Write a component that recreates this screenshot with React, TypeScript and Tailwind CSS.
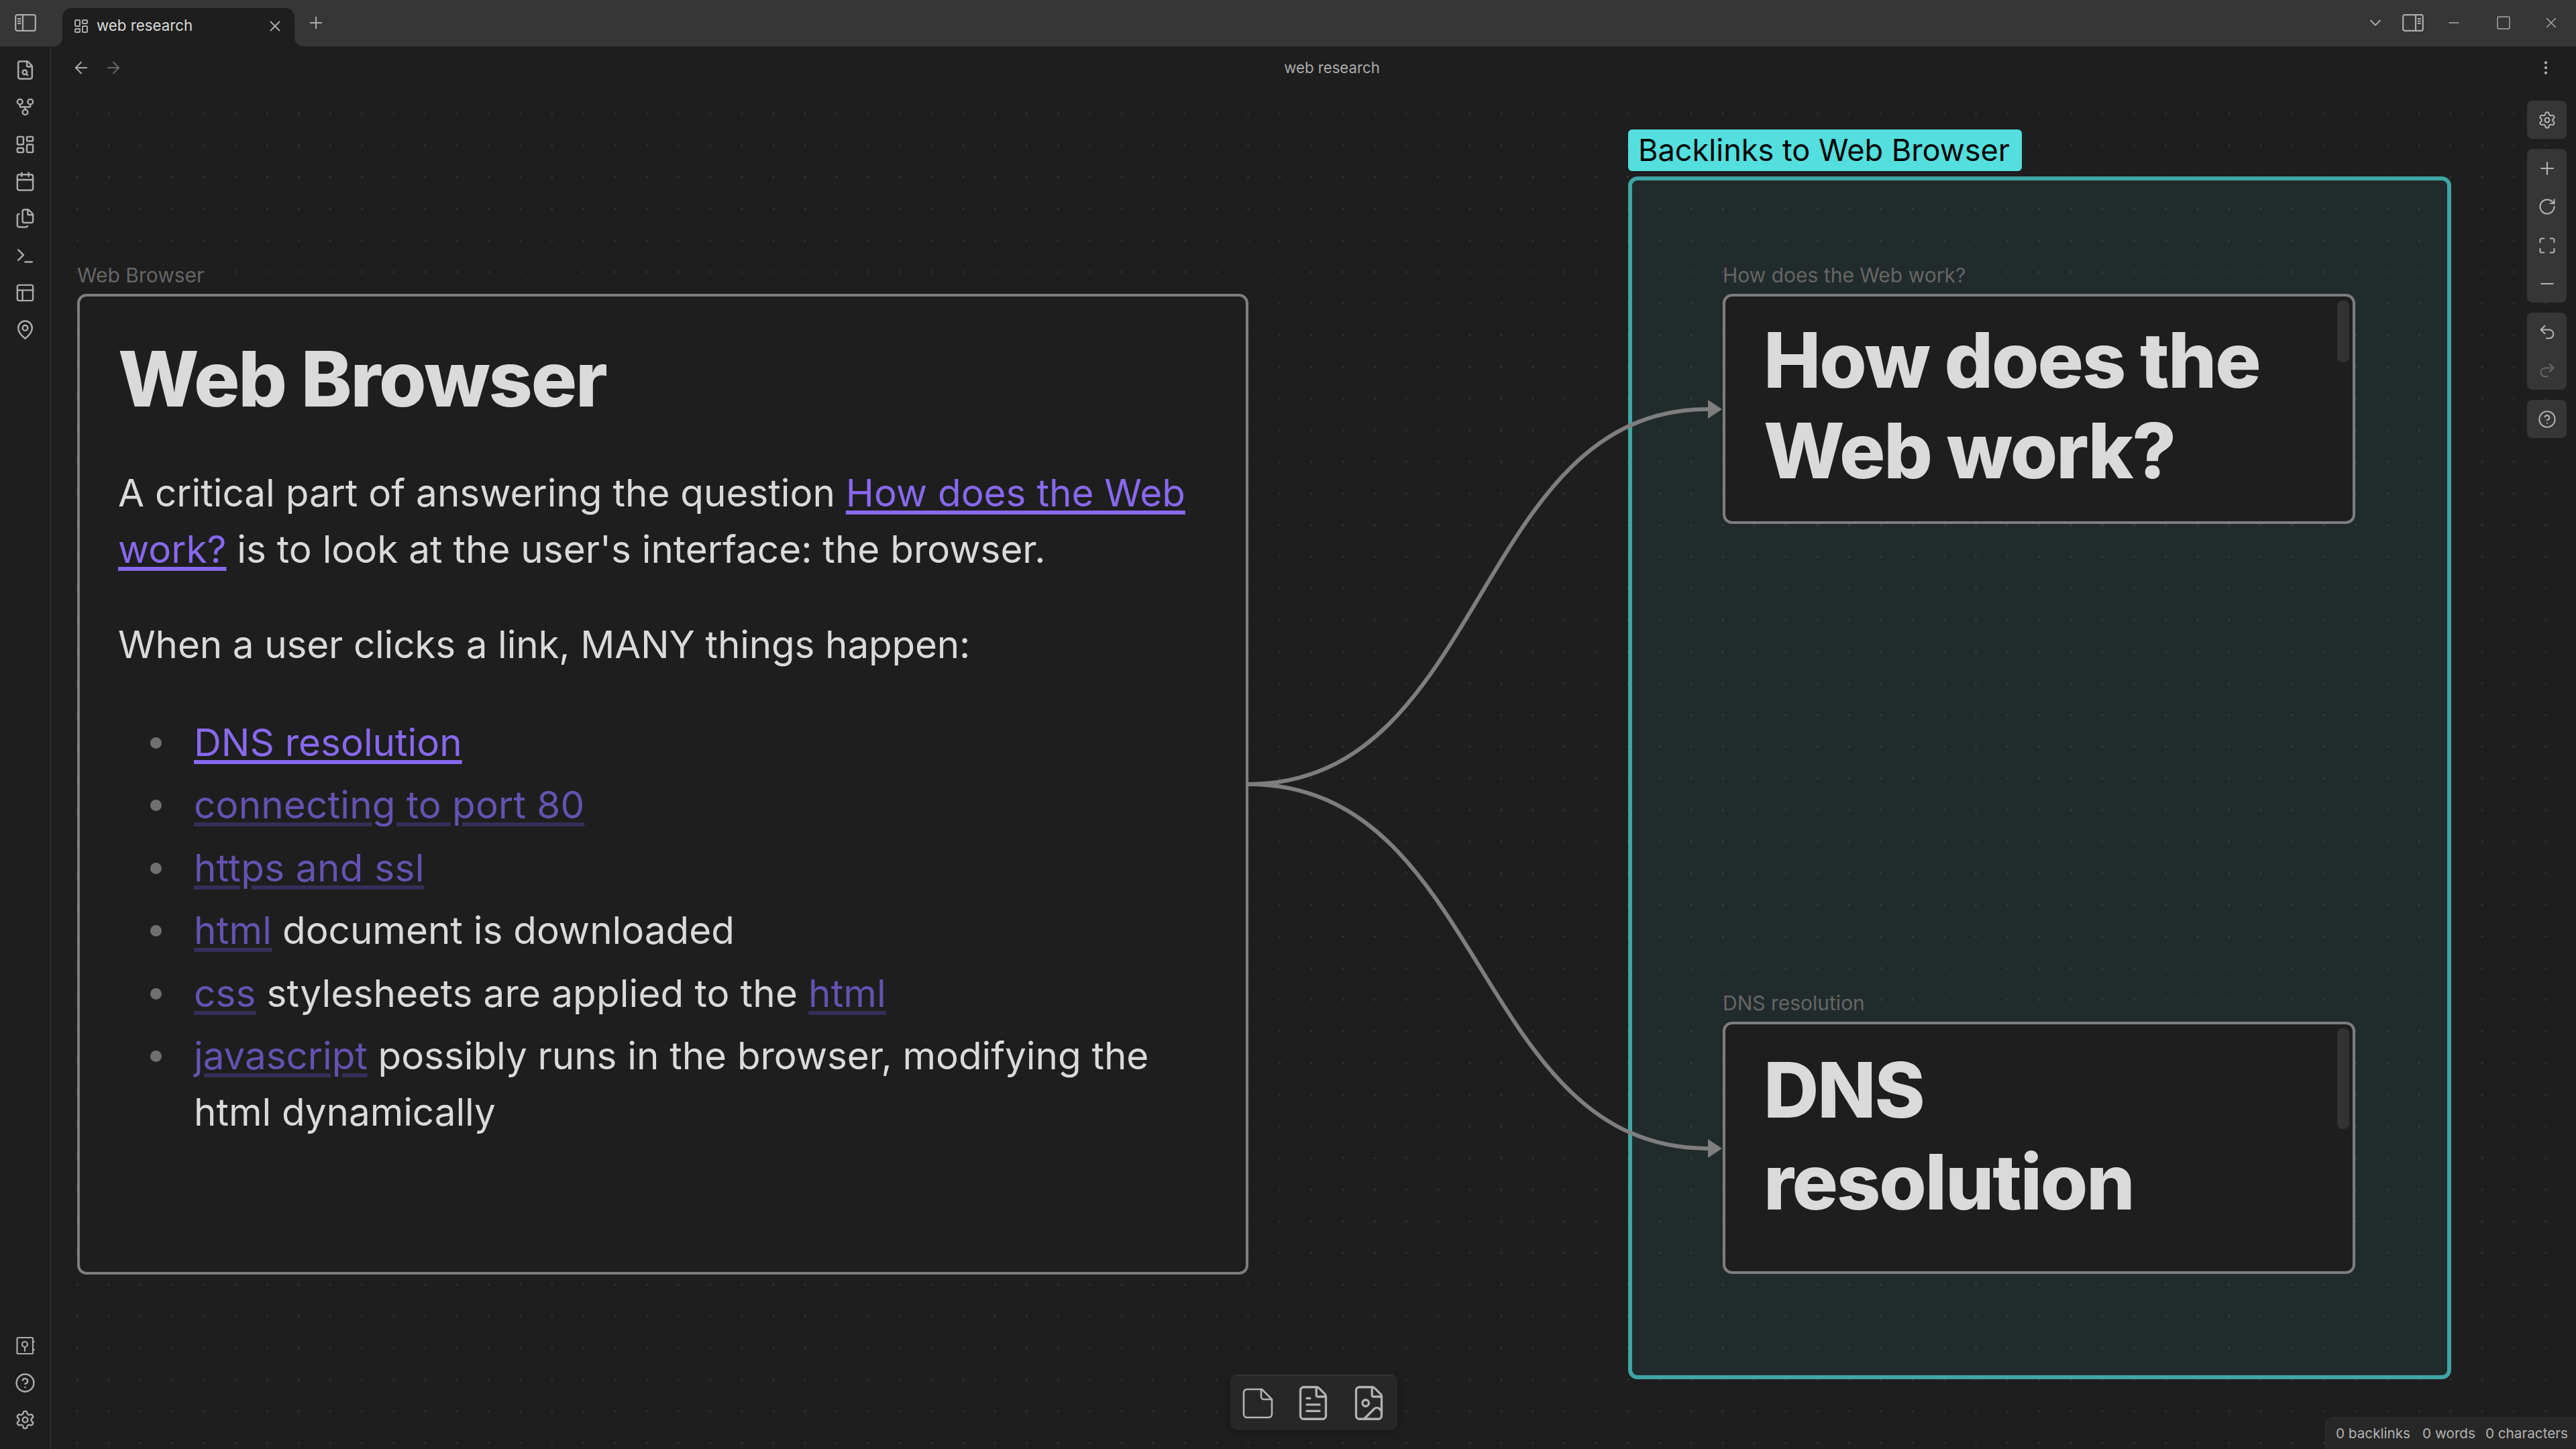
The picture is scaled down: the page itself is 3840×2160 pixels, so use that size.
import React from "react";
import {
  FileSearch, GitFork, LayoutDashboard, Calendar, Files, Terminal, PanelsTopLeft, MapPin,
  CircleHelp, Settings, X, Plus, ChevronDown, Minus, Square, ArrowLeft, ArrowRight,
  EllipsisVertical, RotateCw, Maximize, Undo2, Redo2, FileText, FileImage,
} from "lucide-react";

const ic = { strokeWidth: 1.9 };

function PanelGlyph({ side }: { side: "left" | "right" }) {
  return (
    <svg width="32" height="26" viewBox="0 0 32 26" fill="none" stroke="#ababab" strokeWidth="2.2" strokeLinecap="round">
      <rect x="1.2" y="1.2" width="29.6" height="23.6" rx="2.5" />
      {side === "left" ? (
        <>
          <path d="M12 1.5v23" />
          <path d="M5 7h3.5M5 10.5h3.5M5 14h3.5" />
        </>
      ) : (
        <>
          <path d="M20 1.5v23" />
          <path d="M23.5 7H27M23.5 10.5H27M23.5 14H27" />
        </>
      )}
    </svg>
  );
}

function VaultGlyph() {
  return (
    <svg width="28" height="28" viewBox="0 0 28 28" fill="none" stroke="#ababab" strokeWidth="2.2" strokeLinecap="round">
      <rect x="1.5" y="2" width="23.5" height="24" rx="1.5" />
      <circle cx="13" cy="12" r="4" />
      <path d="M13 16v6" />
      <path d="M25.5 8h1.5M25.5 20h1.5" />
    </svg>
  );
}

function NoteGlyph() {
  return (
    <svg width="46" height="46" viewBox="0 0 46 46" fill="none" stroke="#b3b3b3" strokeWidth="2.6" strokeLinejoin="round">
      <path d="M29 2H7a5 5 0 0 0-5 5v32a5 5 0 0 0 5 5h32a5 5 0 0 0 5-5V17Z" />
      <path d="M28 2v11a4 4 0 0 0 4 4h12" />
    </svg>
  );
}

function RibbonIcon({ children }: { children: React.ReactNode }) {
  return <div className="flex h-[55.3px] w-full items-center justify-center text-[#ababab]">{children}</div>;
}

function WinIcon({ children, className }: { children: React.ReactNode; className: string }) {
  return <div className={`flex items-center justify-center text-[#ababab] ${className}`}>{children}</div>;
}

function ToolBtn({ children, dim }: { children: React.ReactNode; dim?: boolean }) {
  return (
    <div className={`flex h-[57.3px] w-full items-center justify-center ${dim ? "text-[#666666]" : "text-[#b3b3b3]"}`}>
      {children}
    </div>
  );
}

function Link({ children, dim }: { children: React.ReactNode; dim?: boolean }) {
  return (
    <span
      className={`underline decoration-[5.5px] underline-offset-[6px] ${
        dim ? "text-[#6552b1] decoration-[#382e58]" : "text-[#8868ee] decoration-[#8868ee]"
      }`}
    >
      {children}
    </span>
  );
}

function Li({ children }: { children: React.ReactNode }) {
  return (
    <li className="relative">
      <span className="absolute left-[-65px] top-[34px] h-[17px] w-[17px] rounded-full bg-[#707070]" />
      {children}
    </li>
  );
}

export default function App() {
  return (
    <div className="flex h-[2160px] w-[3840px] flex-col overflow-hidden bg-[#1e1e1e] font-['Inter',sans-serif] text-[#dadada]">
      {/* Title bar */}
      <div className="flex h-[69px] shrink-0 items-stretch bg-[#363636]">
        <div className="flex w-[75px] items-center justify-center pb-[2px]">
          <PanelGlyph side="left" />
        </div>
        <div className="relative ml-[18px] mt-[12px] flex w-[346px] items-center rounded-t-[14px] bg-[#1e1e1e] pb-[4px] pl-[16px] pr-[16px]">
          <span className="absolute bottom-0 left-[-14px] h-[14px] w-[14px] bg-[radial-gradient(circle_at_0_0,#363636_14px,#1e1e1e_14.5px)]" />
          <span className="absolute bottom-0 right-[-14px] h-[14px] w-[14px] bg-[radial-gradient(circle_at_100%_0,#363636_14px,#1e1e1e_14.5px)]" />
          <LayoutDashboard size={24} strokeWidth={2} className="text-[#ababab]" />
          <span className="ml-[11px] text-[22.3px] leading-none text-[#dadada]">web research</span>
          <X size={26} strokeWidth={1.75} className="ml-auto text-[#ababab]" />
        </div>
        <div className="ml-[18px] flex items-center pb-[1px] text-[#ababab]">
          <Plus size={28} strokeWidth={1.75} />
        </div>
        <div className="ml-auto flex h-full items-center pb-[2px]">
          <WinIcon className="w-[40px]"><ChevronDown size={28} strokeWidth={1.6} /></WinIcon>
          <WinIcon className="ml-[16px] w-[40px]"><PanelGlyph side="right" /></WinIcon>
          <WinIcon className="ml-[21px] w-[40px]"><Minus size={24} strokeWidth={1.4} /></WinIcon>
          <WinIcon className="ml-[34px] w-[40px]"><Square size={24} strokeWidth={1.4} /></WinIcon>
          <WinIcon className="ml-[31px] mr-[17px] w-[40px]"><X size={26} strokeWidth={1.3} /></WinIcon>
        </div>
      </div>

      <div className="flex min-h-0 flex-1">
        {/* Ribbon */}
        <div className="flex w-[76px] shrink-0 flex-col items-center border-r-[1.5px] border-[#363636] pb-[16px] pt-[8px]">
          <RibbonIcon><FileSearch size={31} {...ic} /></RibbonIcon>
          <RibbonIcon><GitFork size={31} {...ic} /></RibbonIcon>
          <RibbonIcon><LayoutDashboard size={31} {...ic} /></RibbonIcon>
          <RibbonIcon><Calendar size={31} {...ic} /></RibbonIcon>
          <RibbonIcon><Files size={31} {...ic} /></RibbonIcon>
          <RibbonIcon><Terminal size={31} {...ic} /></RibbonIcon>
          <RibbonIcon><PanelsTopLeft size={31} {...ic} /></RibbonIcon>
          <RibbonIcon><MapPin size={31} {...ic} /></RibbonIcon>
          <div className="mt-auto w-full">
            <RibbonIcon><VaultGlyph /></RibbonIcon>
            <RibbonIcon><CircleHelp size={31} {...ic} /></RibbonIcon>
            <RibbonIcon><Settings size={31} {...ic} /></RibbonIcon>
          </div>
        </div>

        {/* Canvas view */}
        <div className="relative min-w-0 flex-1 bg-[#1e1e1e] bg-[radial-gradient(circle,#3a3a3a_1.3px,transparent_1.6px)] bg-[length:47.18px_47.18px] bg-[position:15.6px_29.9px]">
          <div className="flex h-[80px] items-center bg-[#1e1e1e] pb-[16px] pl-[31px] pr-[32px] text-[#ababab]">
            <ArrowLeft size={28} strokeWidth={1.75} />
            <ArrowRight size={28} strokeWidth={1.75} className="ml-[20px] text-[#666666]" />
            <div className="flex-1 pl-[6px] text-center text-[22.2px] leading-none text-[#ababab]">web research</div>
            <EllipsisVertical size={26} strokeWidth={2} />
          </div>

          {/* Group */}
          <div className="absolute left-[2351px] top-[194px] h-[1793px] w-[1227px] rounded-[14px] border-[6px] border-[#3fa5a5] bg-[#53c8c8]/[0.08]" />
          <div className="absolute left-[2351px] top-[124px] flex h-[62px] w-[587px] items-center whitespace-nowrap rounded-[6px] bg-[#53dfdd] pl-[15px] text-[45.1px] leading-none text-black">
            Backlinks to Web Browser
          </div>

          {/* Edges */}
          <svg className="pointer-events-none absolute left-0 top-0" width="3764" height="2091" fill="none">
            <path d="M1784 1100 C2140 1100 2120 541 2470 541" stroke="#7e7e7e" strokeWidth="6" />
            <path d="M1784 1100 C2140 1100 2120 1643 2470 1643" stroke="#7e7e7e" strokeWidth="6" />
            <polygon points="2491,541 2470,527 2470,555" fill="#7e7e7e" />
            <polygon points="2491,1643 2470,1629 2470,1657" fill="#7e7e7e" />
          </svg>

          {/* Web Browser card */}
          <div className="absolute left-[39px] top-[326px] text-[30px] leading-none text-[#666666]">Web Browser</div>
          <div className="absolute left-[39px] top-[369px] h-[1462px] w-[1746px] rounded-[14px] border-[4px] border-[#7e7e7e] bg-[#1e1e1e] px-[57px] text-[56.6px] leading-[84px]">
            <h1 className="mt-[60px] text-[114px] font-extrabold leading-[125px] tracking-[-2.1px]">Web Browser</h1>
            <p className="mt-[66px]">
              A critical part of answering the question <Link>How does the Web work?</Link> is to look at the user's interface: the browser.
            </p>
            <p className="mt-[58px] tracking-[-0.16px]">When a user clicks a link, MANY things happen:</p>
            <ul className="mt-[62px] pl-[113px]">
              <Li><span className="block h-[93.4px]"><Link>DNS resolution</Link></span></Li>
              <Li><span className="block h-[93.4px] tracking-[0.18px]"><Link dim>connecting to port 80</Link></span></Li>
              <Li><span className="block h-[93.4px] tracking-[0.38px]"><Link dim>https and ssl</Link></span></Li>
              <Li><span className="block h-[93.4px]"><span className="tracking-[0.2px]"><Link dim>html</Link></span> document is downloaded</span></Li>
              <Li><span className="block h-[93.4px] tracking-[0.14px]"><Link dim>css</Link> stylesheets are applied to the <Link dim>html</Link></span></Li>
              <Li><span className="tracking-[-0.05px]"><Link dim>javascript</Link> possibly runs in the browser, modifying the html dynamically</span></Li>
            </ul>
          </div>

          {/* How does the Web work card */}
          <div className="absolute left-[2492px] top-[326px] text-[30px] leading-none text-[#666666]">How does the Web work?</div>
          <div className="absolute left-[2492px] top-[369px] h-[343px] w-[943px] overflow-hidden rounded-[14px] border-[4px] border-[#7e7e7e] bg-[#1e1e1e] px-[57px] pt-[27px]">
            <div className="absolute right-[5px] top-[6px] h-[92px] w-[18px] rounded-[8px] bg-[#333333]" />
            <h1 className="text-[114px] font-extrabold leading-[135px] tracking-[-2.1px]">How does the Web work?</h1>
          </div>

          {/* DNS card */}
          <div className="absolute left-[2492px] top-[1411px] text-[30px] leading-none text-[#666666]">DNS resolution</div>
          <div className="absolute left-[2492px] top-[1454px] h-[376px] w-[943px] overflow-hidden rounded-[14px] border-[4px] border-[#7e7e7e] bg-[#1e1e1e] px-[57px] pt-[29px]">
            <div className="absolute right-[5px] top-[6px] h-[150px] w-[18px] rounded-[8px] bg-[#333333]" />
            <h1 className="text-[114px] font-extrabold leading-[137px] tracking-[-2.1px]">
              DNS
              <br />
              resolution
            </h1>
          </div>

          {/* Right toolbar */}
          <div className="absolute left-[3691px] top-[81px] flex w-[59px] flex-col gap-[15px]">
            <div className="rounded-[8px] bg-[#363636]">
              <ToolBtn><Settings size={28} strokeWidth={1.75} /></ToolBtn>
            </div>
            <div className="rounded-[8px] bg-[#363636]">
              <ToolBtn><Plus size={30} strokeWidth={1.75} /></ToolBtn>
              <ToolBtn><RotateCw size={28} strokeWidth={1.75} /></ToolBtn>
              <ToolBtn><Maximize size={28} strokeWidth={1.75} /></ToolBtn>
              <ToolBtn><Minus size={30} strokeWidth={1.75} /></ToolBtn>
            </div>
            <div className="rounded-[8px] bg-[#363636]">
              <ToolBtn><Undo2 size={28} strokeWidth={1.75} /></ToolBtn>
              <ToolBtn dim><Redo2 size={28} strokeWidth={1.75} /></ToolBtn>
            </div>
            <div className="rounded-[8px] bg-[#363636]">
              <ToolBtn><CircleHelp size={28} strokeWidth={1.75} /></ToolBtn>
            </div>
          </div>

          {/* Bottom toolbar */}
          <div className="absolute left-[1758px] top-[1980px] flex h-[83px] w-[249px] items-center rounded-[10px] border-t-[2px] border-[#333333] bg-[#272727] pl-[18px] shadow-[0_4px_12px_rgba(0,0,0,0.25)]">
            <NoteGlyph />
            <FileText size={57} strokeWidth={1.4} className="ml-[31px] text-[#b3b3b3]" />
            <FileImage size={57} strokeWidth={1.4} className="ml-[26px] text-[#b3b3b3]" />
          </div>

          {/* Status bar */}
          <div className="absolute bottom-0 right-0 flex h-[47px] w-[374px] items-center whitespace-nowrap rounded-tl-[12px] border-l-[1.5px] border-t-[1.5px] border-[#333333] bg-[#272727] pl-[15px] text-[20.7px] leading-none text-[#b3b3b3]">
            <span>0 backlinks</span>
            <span className="ml-[18px]">0 words</span>
            <span className="ml-[15px]">0 characters</span>
          </div>
        </div>
      </div>
    </div>
  );
}
